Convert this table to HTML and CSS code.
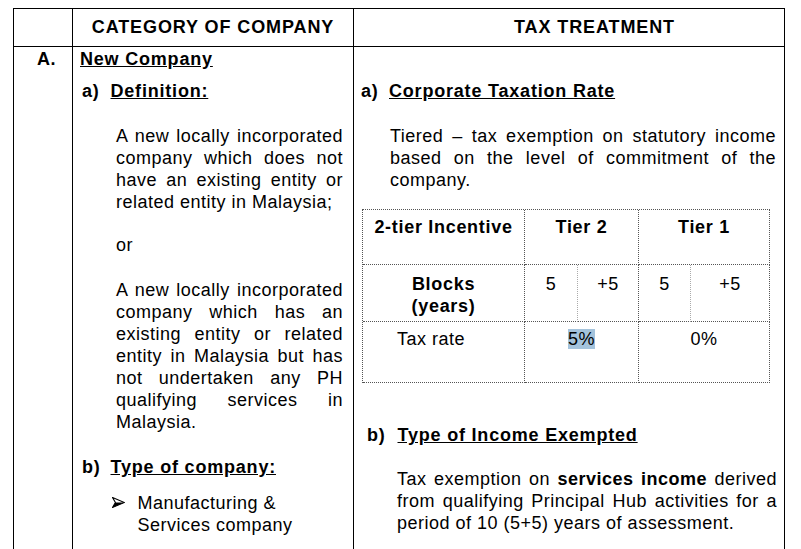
FILE: index.html
```html
<!DOCTYPE html>
<html lang="en">
<head>
<meta charset="utf-8">
<title>Principal Hub – Tax Treatment</title>
<link rel="stylesheet" href="styles.css">
</head>
<body>
<div class="sheet">
  <div class="cell head"></div>
  <div class="cell head">CATEGORY OF COMPANY</div>
  <div class="cell head head-tax">TAX TREATMENT</div>

  <div class="cell main num">A.</div>

  <div class="cell main cat">
    <div class="title">New Company</div>
    <div class="sec sec-def"><span class="mark">a)</span><span class="u">Definition:</span></div>
    <div class="para para-def1">
      <div class="jl">A new locally incorporated</div>
      <div class="jl">company which does not</div>
      <div class="jl">have an existing entity or</div>
      <div>related entity in Malaysia;</div>
    </div>
    <div class="para or">or</div>
    <div class="para para-def2">
      <div class="jl">A new locally incorporated</div>
      <div class="jl">company which has an</div>
      <div class="jl">existing entity or related</div>
      <div class="jl">entity in Malaysia but has</div>
      <div class="jl">not undertaken any PH</div>
      <div class="jl">qualifying services in</div>
      <div>Malaysia.</div>
    </div>
    <div class="sec sec-type"><span class="mark">b)</span><span class="u">Type of company:</span></div>
    <div class="bullet">
      <svg class="arrow" width="13" height="11" viewBox="0 0 13 11" aria-hidden="true">
        <path d="M0.6 0.6 L12.4 5.5 L0.6 10.4 L3.4 5.5 Z" fill="none" stroke="#000" stroke-width="1.1" stroke-linejoin="miter"/>
        <path d="M3.4 5.5 L12.4 5.5 L0.6 10.4 Z" fill="#000"/>
      </svg>
      <div class="bullet-text">Manufacturing &amp;<br>Services company</div>
    </div>
  </div>

  <div class="cell main tax">
    <div class="sec sec-rate"><span class="mark">a)</span><span class="u">Corporate Taxation Rate</span></div>
    <div class="para para-rate">
      <div class="jl">Tiered – tax exemption on statutory income</div>
      <div class="jl">based on the level of commitment of the</div>
      <div>company.</div>
    </div>

    <div class="tiers">
      <div class="tc bold r1 c-first">2-tier Incentive</div>
      <div class="tc bold r1 span2">Tier 2</div>
      <div class="tc bold r1 span2 last">Tier 1</div>

      <div class="tc bold r2 c-first">Blocks<br>(years)</div>
      <div class="tc r2 sub">5</div>
      <div class="tc r2">+5</div>
      <div class="tc r2 sub">5</div>
      <div class="tc r2 last">+5</div>

      <div class="tc r3 c-first left">Tax rate</div>
      <div class="tc r3 span2"><span class="hl">5%</span></div>
      <div class="tc r3 span2 last">0%</div>
    </div>

    <div class="sec sec-income"><span class="mark">b)</span><span class="u">Type of Income Exempted</span></div>
    <div class="para para-income">
      <div class="jl">Tax exemption on <b>services income</b> derived</div>
      <div class="jl">from qualifying Principal Hub activities for a</div>
      <div>period of 10 (5+5) years of assessment.</div>
    </div>
  </div>
</div>
</body>
</html>
```

FILE: styles.css
```css
* {
  box-sizing: border-box;
}

html {
  overflow: hidden;
}

body {
  margin: 0;
  background: #fff;
  color: #000;
  font-family: "Liberation Sans", Arial, sans-serif;
  font-size: 18px;
  line-height: 22px;
  letter-spacing: 0.5px;
}

/* outer sheet grid */
.sheet {
  display: grid;
  grid-template-columns: 59px 281px 431px;
  width: 772px;
  margin: 8px 0 0 13px;
  border-top: 1px solid #000;
  border-left: 1px solid #000;
}

.cell {
  border-right: 1px solid #000;
  border-bottom: 1px solid #000;
}

.head {
  height: 38px;
  padding-top: 7px;
  font-weight: bold;
  letter-spacing: 0.9px;
  text-align: center;
}

.head-tax {
  padding-left: 51px;
}

/* the body row continues below the visible frame: no closing border */
.main {
  height: 502px;
  border-bottom: none;
}

.num {
  padding: 1px 0 0 23px;
  font-weight: bold;
}

/* headings */
.title {
  margin: 1px 0 0 7px;
  font-weight: bold;
  letter-spacing: 0.8px;
  text-decoration: underline;
}

.sec {
  display: flex;
  font-weight: bold;
  letter-spacing: 0.8px;
}

.u {
  text-decoration: underline;
}

.sec-def {
  margin: 10px 0 0 9px;
}

.sec-def .mark,
.sec-type .mark {
  width: 28.5px;
}

.sec-type {
  margin: 23px 0 0 9px;
}

.jl {
  text-align: justify;
  text-align-last: justify;
}

/* left column paragraphs */
.para-def1 {
  margin: 23px 0 0 43px;
  width: 227px;
}

.or {
  margin: 21px 0 0 43px;
}

.para-def2 {
  margin: 23px 0 0 43px;
  width: 227px;
}

.bullet {
  display: flex;
  align-items: flex-start;
  margin: 14px 0 0 39px;
}

.arrow {
  flex: none;
  margin-top: 5px;
}

.bullet-text {
  margin-left: 12.5px;
}

/* right column */
.sec-rate {
  margin: 33px 0 0 7px;
}

.sec-rate .mark {
  width: 28px;
}

.para-rate {
  margin: 23px 0 0 36px;
  width: 386px;
}

.tiers {
  display: grid;
  grid-template-columns: 162px 53px 61px 52px 79px;
  grid-template-rows: 55px 57px 61px;
  width: 408px;
  margin: 18px 0 0 8px;
  border-top: 1px dotted #555;
  border-left: 1px dotted #555;
}

.tc {
  border-right: 1px dotted #555;
  border-bottom: 1px dotted #555;
  text-align: center;
}

.tc.sub {
  border-right-color: #aaa;
}

.bold {
  font-weight: bold;
  letter-spacing: 0.7px;
}

.span2 {
  grid-column: span 2;
}

.r1 {
  padding-top: 6px;
}

.r2 {
  padding-top: 8px;
}

.r3 {
  padding-top: 6px;
}

.left {
  text-align: left;
  padding-left: 34px;
}

.hl {
  background: #a4c3dc;
}

.sec-income {
  margin: 41px 0 0 13px;
}

.sec-income .mark {
  width: 30.5px;
}

.para-income {
  margin: 22px 0 0 43px;
  width: 380px;
}

.para-income b {
  letter-spacing: 0.5px;
}
```
